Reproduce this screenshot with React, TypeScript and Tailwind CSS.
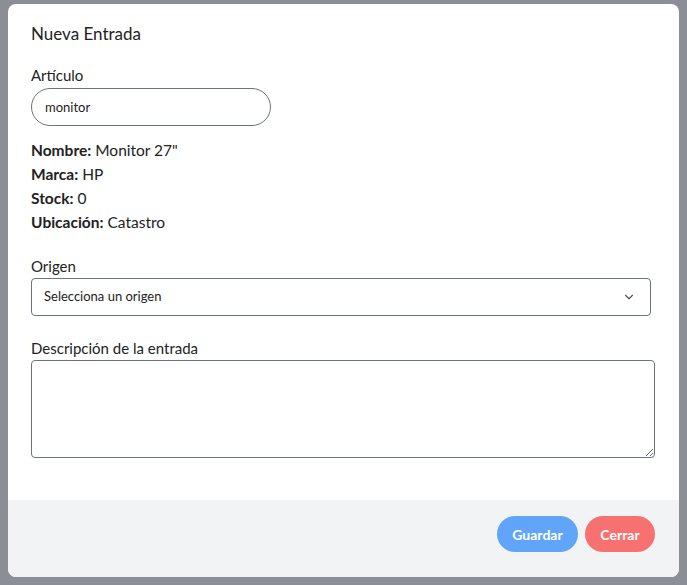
import React from "react";
import { ChevronDown } from "lucide-react";

const info = [
  { k: "Nombre:", v: "Monitor 27\"" },
  { k: "Marca:", v: "HP" },
  { k: "Stock:", v: "0" },
  { k: "Ubicación:", v: "Catastro" },
];

export default function App() {
  return (
    <div
      className="w-[687px] h-[585px] bg-[#8b8e97] pt-[4px] pl-[8px]"
      style={{ fontFamily: "Lato, 'Noto Sans', sans-serif" }}
    >
      <div className="w-[671px] h-[573px] bg-white rounded-lg overflow-hidden flex flex-col text-[#222]">
        <div className="flex-1 px-[23px] pt-[18px]">
          <h3 className="text-[17px] leading-6">Nueva Entrada</h3>
          <label className="block mt-[19px] text-[15px] leading-5">Artículo</label>
          <input
            className="mt-[3px] w-[240px] h-[38px] rounded-full border border-[#6b7280] px-[13px] text-[13px] outline-none"
            defaultValue="monitor"
          />
          <div className="mt-[12px] text-[15.5px] leading-6">
            {info.map((r) => (
              <p key={r.k}>
                <span className="font-bold">{r.k}</span> {r.v}
              </p>
            ))}
          </div>
          <label className="block mt-[22px] text-[15px] leading-5">Origen</label>
          <div className="mt-[2px] w-[620px] h-[38px] rounded border border-[#6b7280] flex items-center justify-between pl-[12px] pr-[14px] text-[13px]">
            <span>Selecciona un origen</span>
            <ChevronDown size={14} strokeWidth={2} className="text-[#555]" />
          </div>
          <label className="block mt-[22px] text-[15px] leading-5">Descripción de la entrada</label>
          <textarea className="mt-[2px] block w-[624px] h-[98px] rounded border border-[#6b7280] outline-none" />
        </div>
        <div className="h-[77px] bg-[#f1f3f4] flex justify-end items-start gap-[7px] pt-[16px] pr-[24px]">
          <button className="w-[81px] h-[36px] rounded-full bg-[#60a5fa] text-white font-bold text-[14px]">
            Guardar
          </button>
          <button className="w-[70px] h-[36px] rounded-full bg-[#f87171] text-white font-bold text-[14px]">
            Cerrar
          </button>
        </div>
      </div>
    </div>
  );
}
